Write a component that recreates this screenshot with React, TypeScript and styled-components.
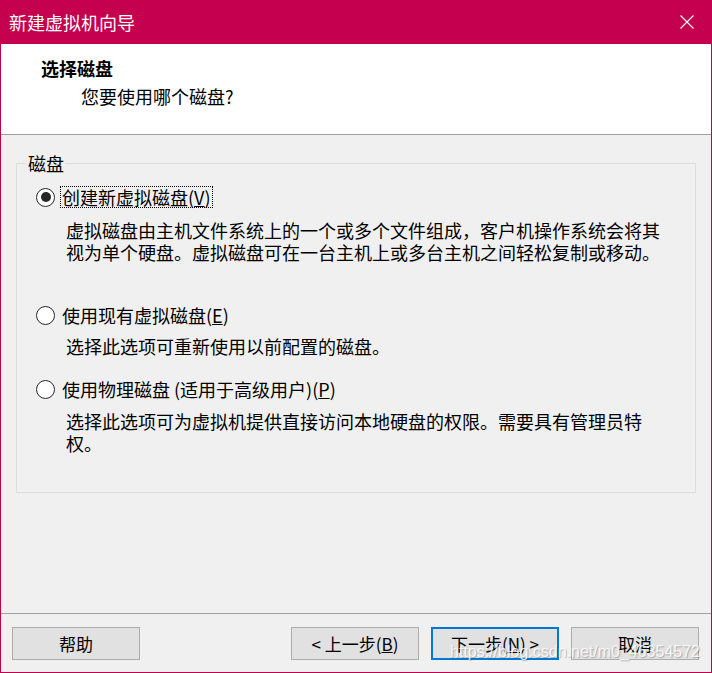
import React from 'react';
import styled, { createGlobalStyle } from 'styled-components';

const GlobalStyle = createGlobalStyle`
  * { box-sizing: border-box; }
  html, body { margin: 0; padding: 0; background: #ffffff; }
  body { font-family: "Noto Sans CJK SC", "Noto Sans", sans-serif; color: #000; }
`;

const accent = '#c4004f';

const Window = styled.div({
  position: 'relative',
  width: '712px',
  height: '673px',
  display: 'flex',
  flexDirection: 'column',
  background: '#f0f0f0',
  borderLeft: `1px solid ${accent}`,
  borderRight: `1px solid ${accent}`,
  borderBottom: `1px solid ${accent}`,
  overflow: 'hidden'
});

const TitleBar = styled.div({
  height: '44px',
  flexShrink: 0,
  display: 'flex',
  alignItems: 'center',
  justifyContent: 'space-between',
  padding: '0 17px 0 8px',
  background: accent,
  color: '#ffffff',
  fontSize: '18px'
});

const CloseIcon = styled.svg({
  width: '14px',
  height: '14px',
  display: 'block'
});

const Header = styled.div({
  height: '91px',
  flexShrink: 0,
  background: '#ffffff',
  borderBottom: '1px solid #a0a0a0',
  padding: '12px 0 0 40px'
});

const Heading = styled.div({
  fontSize: '18px',
  fontWeight: 'bold',
  lineHeight: '24px'
});

const SubHeading = styled.div({
  fontSize: '18px',
  lineHeight: '24px',
  marginTop: '4px',
  marginLeft: '40px'
});

const Body = styled.div({
  flex: 1,
  borderBottom: '1px solid #a0a0a0'
});

const GroupBox = styled.fieldset({
  margin: '17px 15px 0 15px',
  padding: 0,
  minWidth: 0,
  border: '1px solid #dcdcdc'
});

const GroupLabel = styled.legend({
  marginLeft: '10px',
  padding: '0 1px',
  fontSize: '18px',
  lineHeight: '22px'
});

const Options = styled.div({
  padding: '12px 0 38px 19px'
});

const OptionBlock = styled.div<{ $after: number }>((props) => ({
  marginBottom: `${props.$after}px`
}));

const OptionRow = styled.div({
  display: 'flex',
  alignItems: 'center',
  height: '22px'
});

const Radio = styled.span<{ $checked?: boolean }>((props) => ({
  width: '19px',
  height: '19px',
  borderRadius: '50%',
  border: '1.6px solid #262626',
  background: '#ffffff',
  marginRight: '5px',
  display: 'flex',
  alignItems: 'center',
  justifyContent: 'center',
  flexShrink: 0,
  '&::after': {
    content: '""',
    width: '10px',
    height: '10px',
    borderRadius: '50%',
    background: props.$checked ? '#262626' : 'transparent'
  }
}));

const OptionLabel = styled.span<{ $focused?: boolean }>((props) => ({
  fontSize: '18px',
  lineHeight: '20px',
  padding: '0 1px',
  border: props.$focused ? '1px dotted #000000' : '1px solid transparent'
}));

const Description = styled.div<{ $top: number }>((props) => ({
  marginTop: `${props.$top}px`,
  paddingLeft: '30px',
  fontSize: '18px',
  lineHeight: '22px'
}));

const Footer = styled.div({
  position: 'relative',
  height: '58px',
  flexShrink: 0,
  display: 'flex',
  justifyContent: 'space-between',
  padding: '13px 12px 0 11px'
});

const ButtonGroup = styled.div({
  display: 'flex',
  gap: '12px'
});

const Button = styled.button<{ $default?: boolean }>((props) => ({
  width: '128px',
  height: '33px',
  padding: 0,
  background: '#e1e1e1',
  border: props.$default ? '2px solid #0078d7' : '1px solid #adadad',
  fontFamily: '"Noto Sans CJK SC", "Noto Sans", sans-serif',
  fontSize: '17px',
  color: '#000000',
  whiteSpace: 'pre'
}));

const Watermark = styled.div({
  position: 'absolute',
  right: '11px',
  top: '29px',
  fontFamily: '"Liberation Sans", Arial, sans-serif',
  fontSize: '16px',
  lineHeight: '18px',
  color: 'rgba(255, 255, 255, 0.85)',
  textShadow: '1px 1px 1px rgba(0, 0, 0, 0.25)',
  pointerEvents: 'none'
});

export default function App() {
  return (
    <>
      <GlobalStyle />
      <Window>
        <TitleBar>
          <span>新建虚拟机向导</span>
          <CloseIcon viewBox="0 0 14 14">
            <path d="M0.5 0.5 L13.5 13.5 M13.5 0.5 L0.5 13.5" stroke="#ffffff" strokeWidth="1.1" fill="none" />
          </CloseIcon>
        </TitleBar>
        <Header>
          <Heading>选择磁盘</Heading>
          <SubHeading>您要使用哪个磁盘?</SubHeading>
        </Header>
        <Body>
          <GroupBox>
            <GroupLabel>磁盘</GroupLabel>
            <Options>
              <OptionBlock $after={41}>
                <OptionRow>
                  <Radio $checked />
                  <OptionLabel $focused>创建新虚拟磁盘(<u>V</u>)</OptionLabel>
                </OptionRow>
                <Description $top={11}>
                  虚拟磁盘由主机文件系统上的一个或多个文件组成，客户机操作系统会将其
                  <br />
                  视为单个硬盘。虚拟磁盘可在一台主机上或多台主机之间轻松复制或移动。
                </Description>
              </OptionBlock>
              <OptionBlock $after={21}>
                <OptionRow>
                  <Radio />
                  <OptionLabel>使用现有虚拟磁盘(<u>E</u>)</OptionLabel>
                </OptionRow>
                <Description $top={9}>选择此选项可重新使用以前配置的磁盘。</Description>
              </OptionBlock>
              <OptionBlock $after={0}>
                <OptionRow>
                  <Radio />
                  <OptionLabel>使用物理磁盘 (适用于高级用户)(<u>P</u>)</OptionLabel>
                </OptionRow>
                <Description $top={10}>
                  选择此选项可为虚拟机提供直接访问本地硬盘的权限。需要具有管理员特
                  <br />
                  权。
                </Description>
              </OptionBlock>
            </Options>
          </GroupBox>
        </Body>
        <Footer>
          <Button>帮助</Button>
          <ButtonGroup>
            <Button>&lt; 上一步(<u>B</u>)</Button>
            <Button $default>下一步(<u>N</u>) &gt;</Button>
            <Button>取消</Button>
          </ButtonGroup>
          <Watermark>https://blog.csdn.net/m0_46354572</Watermark>
        </Footer>
      </Window>
    </>
  );
}
